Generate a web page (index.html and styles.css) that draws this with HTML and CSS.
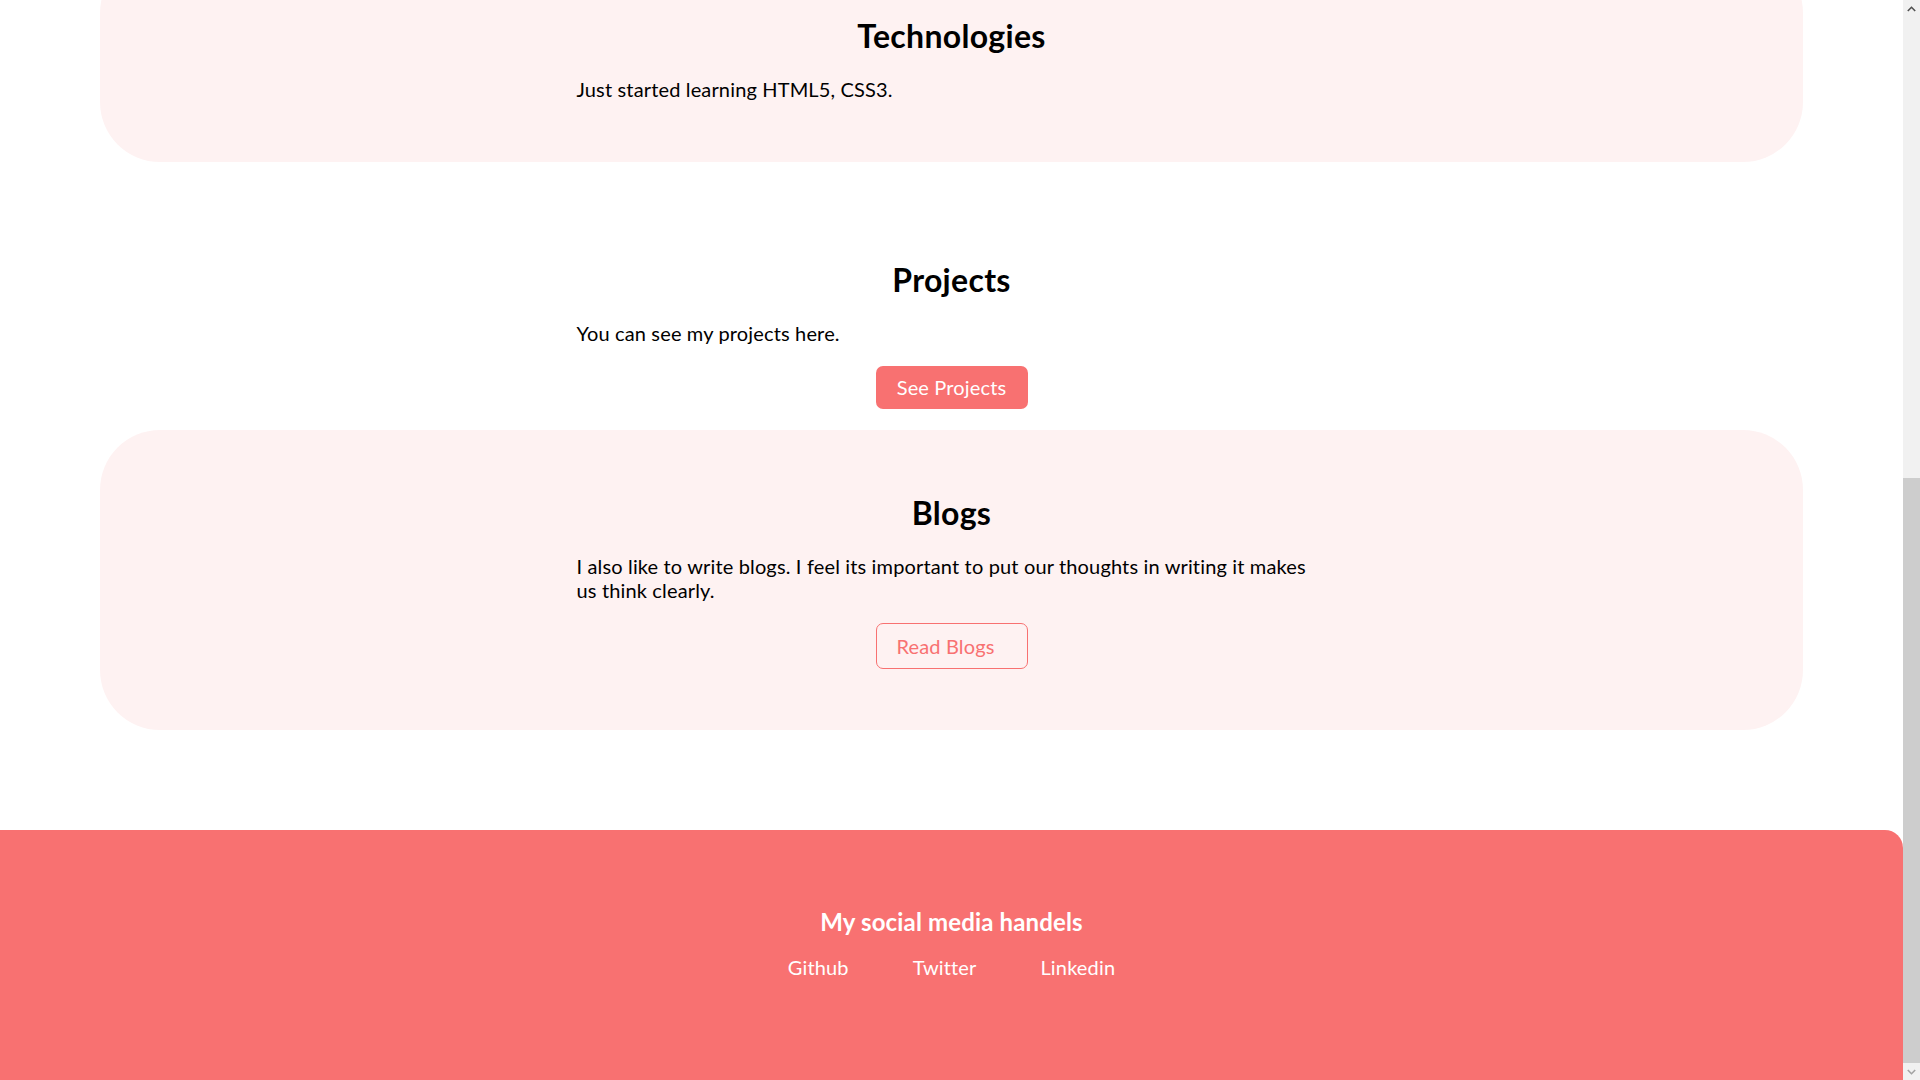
FILE: index.html
```html
<!DOCTYPE html>
<html lang="en">
<head>
<meta charset="utf-8">
<title>Portfolio</title>
<link rel="stylesheet" href="styles.css">
</head>
<body>
<div class="page-top"></div>
<main class="content">
  <section class="card">
    <div class="inner">
      <h2 class="sec-title">Technologies</h2>
      <p class="sec-text">Just started learning HTML5, CSS3.</p>
    </div>
  </section>
  <section class="plain">
    <div class="inner">
      <h2 class="sec-title">Projects</h2>
      <p class="sec-text">You can see my projects here.</p>
      <div class="btn-row"><a class="btn btn-primary" href="#">See Projects</a></div>
    </div>
  </section>
  <section class="card">
    <div class="inner">
      <h2 class="sec-title">Blogs</h2>
      <p class="sec-text">I also like to write blogs. I feel its important to put our thoughts in writing it makes us think clearly.</p>
      <div class="btn-row"><a class="btn btn-outline" href="#">Read Blogs</a></div>
    </div>
  </section>
</main>
<footer class="footer">
  <h3 class="footer-title">My social media handels</h3>
  <ul class="social">
    <li><a href="#">Github</a></li>
    <li><a href="#">Twitter</a></li>
    <li><a href="#">Linkedin</a></li>
  </ul>
</footer>
<div class="scrollbar" aria-hidden="true">
  <div class="sb-btn">
    <svg width="9" height="6" viewBox="0 0 9 6"><path d="M0.8 5 L4.5 1.3 L8.2 5" fill="none" stroke="#505050" stroke-width="1.6"/></svg>
  </div>
  <div class="sb-track">
    <div class="sb-space"></div>
    <div class="sb-thumb"></div>
  </div>
  <div class="sb-btn">
    <svg width="9" height="6" viewBox="0 0 9 6"><path d="M0.8 1 L4.5 4.7 L8.2 1" fill="none" stroke="#a3a3a3" stroke-width="1.6"/></svg>
  </div>
</div>
<script src="script.js"></script>
</body>
</html>
```
FILE: styles.css
```css
* { box-sizing: border-box; }
html, body { margin: 0; padding: 0; }

body {
  margin-right: 17px;
  font-family: "Lato", "Open Sans", sans-serif;
  color: #000;
  background: #fff;
  letter-spacing: 0.15px;
}
a { text-decoration: none; }

.page-top { height: 797px; }

.card {
  margin: 0 100px;
  padding: 64px 0 61px;
  background: #fef2f2;
  border-radius: 60px;
}
.plain {
  margin: 35px 100px 0;
  padding: 64px 0 21px;
}
.inner { width: 750px; margin: 0 auto; }
.sec-title {
  margin: 0;
  font-size: 32px;
  line-height: 37px;
  font-weight: 700;
  text-align: center;
  letter-spacing: 0.3px;
}
.sec-text {
  margin: 23px 0 0;
  font-size: 20px;
  line-height: 24px;
}
.btn-row { display: flex; justify-content: center; margin-top: 21px; }
.btn {
  display: block;
  width: 152px;
  font-size: 20px;
  border-radius: 7px;
}
.btn-primary {
  height: 43px;
  line-height: 43px;
  text-align: center;
  background: #f87171;
  color: #fff;
}
.btn-outline {
  height: 46px;
  line-height: 44px;
  padding-left: 20px;
  border: 1px solid #f87171;
  color: #f87171;
}

.footer {
  margin-top: 100px;
  height: 250px;
  padding-top: 78px;
  background: #f87171;
  color: #fff;
  border-top-right-radius: 18px;
  text-align: center;
}
.footer-title {
  margin: 0;
  font-size: 24px;
  line-height: 28px;
  font-weight: 700;
}
.social {
  list-style: none;
  margin: 19px 0 0;
  padding: 0;
  display: flex;
  justify-content: center;
  gap: 64px;
}
.social a { color: #fff; font-size: 20px; line-height: 24px; }

/* browser scrollbar (page is scrolled to its end) */
.scrollbar {
  position: fixed;
  top: 0;
  right: 0;
  width: 17px;
  height: 100vh;
  display: flex;
  flex-direction: column;
  background: #f1f1f1;
}
.sb-btn {
  height: 17px;
  flex: 0 0 17px;
  display: flex;
  align-items: center;
  justify-content: center;
}
.sb-track { flex: 1; display: flex; flex-direction: column; }
.sb-space { flex: 461 0 0; }
.sb-thumb { flex: 585 0 0; background: #cdcdcd; }
```
FILE: script.js
```js
window.scrollTo(0, document.documentElement.scrollHeight);
window.addEventListener('load', function () {
  window.scrollTo(0, document.documentElement.scrollHeight);
});
```
